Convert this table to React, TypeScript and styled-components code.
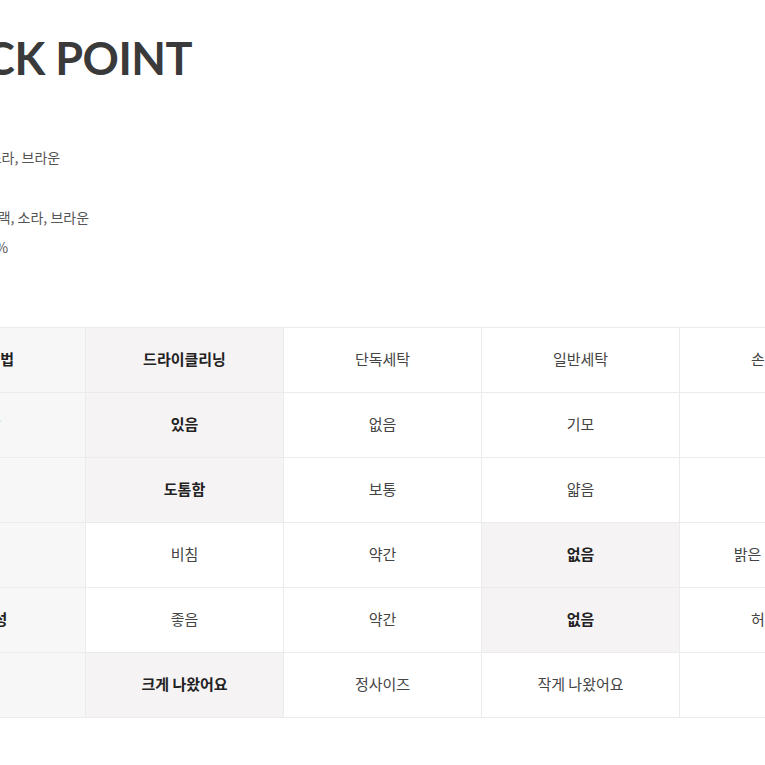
import React from 'react';
import styled, { createGlobalStyle } from 'styled-components';

const GlobalStyle = createGlobalStyle`
  html, body {
    margin: 0;
    padding: 0;
    background: #ffffff;
    overflow: hidden;
  }
  body {
    font-family: "Noto Sans CJK KR", "Noto Sans", sans-serif;
  }
`;

const Page = styled.div`
  width: 1200px;
  margin-left: -113px;
  padding-top: 26px;
`;

const Intro = styled.section`
  padding-left: 10px;
`;

const Title = styled.h2`
  margin: 0;
  font-family: Lato, "Liberation Sans", sans-serif;
  font-weight: 700;
  font-size: 45px;
  line-height: 64px;
  letter-spacing: -0.5px;
  color: #3a3a3a;
`;

const InfoList = styled.ul`
  list-style: none;
  margin: 22px 0 0;
  padding: 0 0 0 23px;
`;

const InfoLine = styled.li`
  font-size: 14px;
  line-height: 30px;
  color: #555555;
`;

const Table = styled.div`
  display: grid;
  grid-template-columns: repeat(6, 198px);
  grid-auto-rows: 65px;
  margin-top: 65px;
  border-top: 1px solid #ebebeb;
  border-left: 1px solid #ebebeb;
  width: max-content;
`;

const Cell = styled.div<{ $head?: boolean; $on?: boolean }>`
  display: flex;
  align-items: center;
  justify-content: center;
  box-sizing: border-box;
  padding-bottom: 3px;
  border-right: 1px solid #ebebeb;
  border-bottom: 1px solid #ebebeb;
  font-size: 15px;
  font-weight: ${p => (p.$head || p.$on ? 700 : 400)};
  color: ${p => (p.$head || p.$on ? '#222222' : '#444444')};
  background: ${p => (p.$head ? '#f7f7f7' : p.$on ? '#f6f3f5' : '#ffffff')};
`;

interface Row {
  label: string;
  options: string[];
  selected: number;
}

const info = [
  '소재 : 면',
  '컬러 : 블랙, 소라, 브라운',
  '길이 : 00',
  '실측 컬러 : 블랙, 소라, 브라운',
  '소재 : 면 100%',
];

const rows: Row[] = [
  { label: '세탁방법', options: ['드라이클리닝', '단독세탁', '일반세탁', '손세탁만', ''], selected: 0 },
  { label: '안감', options: ['있음', '없음', '기모', '부분 ', ''], selected: 0 },
  { label: '두께', options: ['도톰함', '보통', '얇음', '', ''], selected: 0 },
  { label: '비침', options: ['비침', '약간', '없음', '밝은 색상 비침', ''], selected: 2 },
  { label: '신축성', options: ['좋음', '약간', '없음', '허리밴딩', ''], selected: 2 },
  { label: '핏', options: ['크게 나왔어요', '정사이즈', '작게 나왔어요', '', ''], selected: 0 },
];

export default function App() {
  return (
    <>
      <GlobalStyle />
      <Page>
        <Intro>
          <Title>CHECK POINT</Title>
          <InfoList>
            {info.map((t, i) => <InfoLine key={i}>{t}</InfoLine>)}
          </InfoList>
        </Intro>
        <Table>
          {rows.map(r => (
            <React.Fragment key={r.label}>
              <Cell $head>{r.label}</Cell>
              {r.options.map((o, i) => (
                <Cell key={i} $on={i === r.selected}>{o}</Cell>
              ))}
            </React.Fragment>
          ))}
        </Table>
      </Page>
    </>
  );
}
